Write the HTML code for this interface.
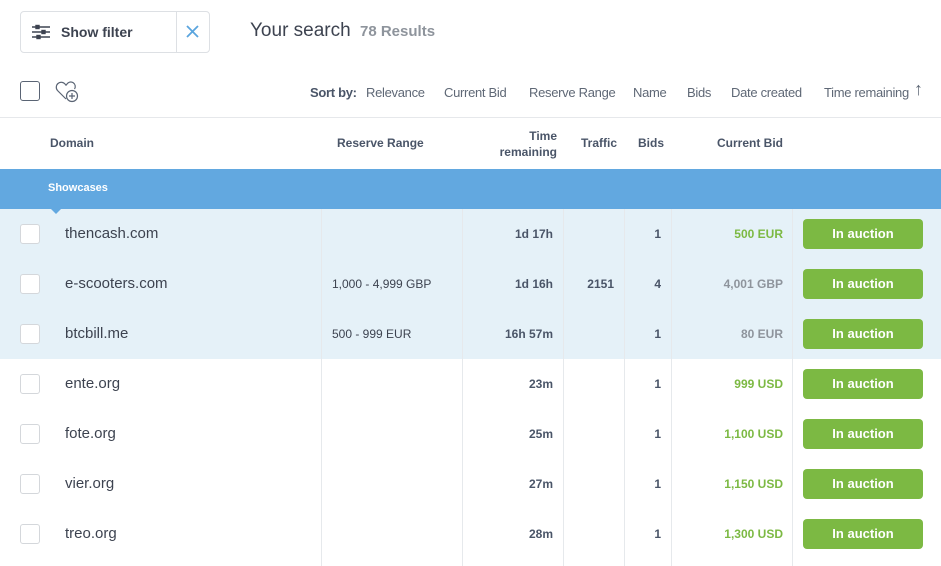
<!DOCTYPE html>
<html><head><meta charset="utf-8"><style>
*{box-sizing:border-box;margin:0;padding:0}
body{width:941px;height:566px;overflow:hidden;background:#fff;font-family:"Liberation Sans",sans-serif;color:#444d5c;position:relative}
.a{position:absolute;white-space:nowrap}
.cb{position:absolute;left:20px;width:20px;height:20px;border:1px solid #d4d7db;border-radius:3px;background:#fff}
.vl{position:absolute;width:1px;background:#e6e9ec;top:209px;height:357px}
.hd{font-size:12px;font-weight:bold;color:#4a5568}
.btn{position:absolute;left:803px;width:120px;height:30px;background:#7cb943;border-radius:4px;color:#fff;font-weight:bold;font-size:13px;text-align:center;line-height:30px}
.dom{font-size:15px;color:#3d4350;left:65px}
.n{font-size:12px;font-weight:bold;color:#4a5568}
.g{color:#7cb943;font-size:12px;font-weight:bold}
.gr{color:#8e949c;font-size:12px;font-weight:bold}
.s{font-size:13px;color:#5f6876;top:85px;letter-spacing:-0.3px}
</style></head><body>
<div class="a" style="left:20px;top:11px;width:190px;height:42px;border:1px solid #dde0e4;border-radius:4px"></div>
<div class="a" style="left:176px;top:12px;width:1px;height:40px;background:#dde0e4"></div>
<svg class="a" style="left:31px;top:24px" width="20" height="16" viewBox="0 0 20 16" stroke="#3d4350" stroke-width="1.4"><path d="M1 3h18M1 8h18M1 13h18"/><rect x="5" y="1.5" width="3" height="3" fill="#3d4350"/><rect x="11" y="6.5" width="3" height="3" fill="#3d4350"/><rect x="6" y="11.5" width="3" height="3" fill="#3d4350"/></svg>
<div class="a" style="left:61px;top:24px;font-size:14px;font-weight:bold;color:#3d4350">Show filter</div>
<svg class="a" style="left:186px;top:25px" width="13" height="13" stroke="#5aa5de" stroke-width="1.8"><path d="M1 1l11 11M12 1L1 12"/></svg>
<div class="a" style="left:250px;top:20px;font-size:19px;color:#3d4350">Your search</div>
<div class="a" style="left:360px;top:23px;font-size:15px;font-weight:bold;color:#8e949c">78 Results</div>
<div class="a" style="left:20px;top:81px;width:20px;height:20px;border:1.5px solid #5a6474;border-radius:3px"></div>
<svg class="a" style="left:54px;top:79px" width="26" height="26" viewBox="0 0 26 26" fill="none" stroke="#5a6474" stroke-width="1.2"><path d="M12 20L3.5 11.5A4.5 4.5 0 0 1 11 5l1 1.2 1-1.2a4.5 4.5 0 0 1 7.5 5"/><circle cx="18" cy="17" r="5.5"/><path d="M18 14v6M15 17h6"/></svg>
<div class="a s" style="left:310px;font-weight:bold;color:#4a5568">Sort by:</div>
<div class="a s" style="left:366px">Relevance</div>
<div class="a s" style="left:444px">Current Bid</div>
<div class="a s" style="left:529px">Reserve Range</div>
<div class="a s" style="left:633px">Name</div>
<div class="a s" style="left:687px">Bids</div>
<div class="a s" style="left:731px">Date created</div>
<div class="a s" style="left:824px">Time remaining</div>
<div class="a" style="left:914px;top:79px;font-size:18px;color:#5f6876">↑</div>
<div class="a" style="left:0;top:117px;width:941px;height:1px;background:#e6e8eb"></div>
<div class="a hd" style="left:50px;top:136px">Domain</div>
<div class="a hd" style="left:337px;top:136px">Reserve Range</div>
<div class="a hd" style="left:490px;top:128px;width:67px;text-align:right;line-height:16px">Time<br>remaining</div>
<div class="a hd" style="left:581px;top:136px">Traffic</div>
<div class="a hd" style="left:638px;top:136px">Bids</div>
<div class="a hd" style="left:717px;top:136px">Current Bid</div>
<div class="a" style="left:0;top:169px;width:941px;height:40px;background:#62a8e0"></div>
<div class="a" style="left:48px;top:182px;font-size:11px;font-weight:bold;color:#fff">Showcases</div>
<div class="a" style="left:0;top:209px;width:941px;height:150px;background:#e5f1f8"></div>
<div class="a" style="left:50px;top:208px;width:0;height:0;border-left:6px solid transparent;border-right:6px solid transparent;border-top:6px solid #62a8e0"></div>
<div class="vl" style="left:321px"></div><div class="vl" style="left:462px"></div><div class="vl" style="left:563px"></div><div class="vl" style="left:624px"></div><div class="vl" style="left:671px"></div><div class="vl" style="left:792px"></div>

<div class="cb" style="top:224px"></div><div class="a dom" style="top:225px">thencash.com</div>
<div class="a n" style="right:388px;top:227px">1d 17h</div><div class="a n" style="right:280px;top:227px">1</div>
<div class="a g" style="right:158px;top:227px">500 EUR</div><div class="btn" style="top:219px">In auction</div>

<div class="cb" style="top:274px"></div><div class="a dom" style="top:275px">e-scooters.com</div>
<div class="a" style="left:332px;top:277px;font-size:12px;color:#3d4350">1,000 - 4,999 GBP</div>
<div class="a n" style="right:388px;top:277px">1d 16h</div><div class="a n" style="right:327px;top:277px">2151</div><div class="a n" style="right:280px;top:277px">4</div>
<div class="a gr" style="right:158px;top:277px">4,001 GBP</div><div class="btn" style="top:269px">In auction</div>

<div class="cb" style="top:324px"></div><div class="a dom" style="top:325px">btcbill.me</div>
<div class="a" style="left:332px;top:327px;font-size:12px;color:#3d4350">500 - 999 EUR</div>
<div class="a n" style="right:388px;top:327px">16h 57m</div><div class="a n" style="right:280px;top:327px">1</div>
<div class="a gr" style="right:158px;top:327px">80 EUR</div><div class="btn" style="top:319px">In auction</div>

<div class="cb" style="top:374px"></div><div class="a dom" style="top:375px">ente.org</div>
<div class="a n" style="right:388px;top:377px">23m</div><div class="a n" style="right:280px;top:377px">1</div>
<div class="a g" style="right:158px;top:377px">999 USD</div><div class="btn" style="top:369px">In auction</div>

<div class="cb" style="top:424px"></div><div class="a dom" style="top:425px">fote.org</div>
<div class="a n" style="right:388px;top:427px">25m</div><div class="a n" style="right:280px;top:427px">1</div>
<div class="a g" style="right:158px;top:427px">1,100 USD</div><div class="btn" style="top:419px">In auction</div>

<div class="cb" style="top:474px"></div><div class="a dom" style="top:475px">vier.org</div>
<div class="a n" style="right:388px;top:477px">27m</div><div class="a n" style="right:280px;top:477px">1</div>
<div class="a g" style="right:158px;top:477px">1,150 USD</div><div class="btn" style="top:469px">In auction</div>

<div class="cb" style="top:524px"></div><div class="a dom" style="top:525px">treo.org</div>
<div class="a n" style="right:388px;top:527px">28m</div><div class="a n" style="right:280px;top:527px">1</div>
<div class="a g" style="right:158px;top:527px">1,300 USD</div><div class="btn" style="top:519px">In auction</div>
</body></html>
